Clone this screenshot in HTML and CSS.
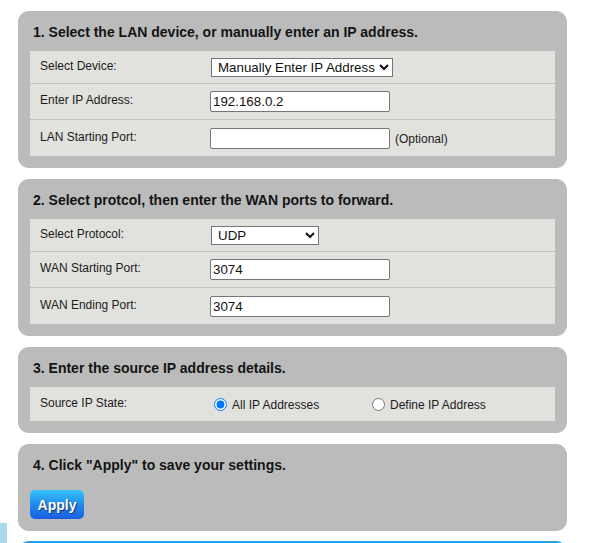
FILE: index.html
```html
<!DOCTYPE html>
<html>
<head>
<meta charset="utf-8">
<link rel="stylesheet" href="styles.css">
</head>
<body>
<div class="page">
  <section class="box">
    <h2 class="box-title">1. Select the LAN device, or manually enter an IP address.</h2>
    <div class="table">
      <div class="row row-select">
        <div class="label">Select Device:</div>
        <div class="field"><select class="sel sel-device"><option>Manually Enter IP Address</option></select></div>
      </div>
      <div class="row">
        <div class="label">Enter IP Address:</div>
        <div class="field"><input class="txt" type="text" value="192.168.0.2"></div>
      </div>
      <div class="row row-last">
        <div class="label">LAN Starting Port:</div>
        <div class="field"><input class="txt" type="text" value=""><span class="hint">(Optional)</span></div>
      </div>
    </div>
  </section>

  <section class="box">
    <h2 class="box-title">2. Select protcol, then enter the WAN ports to forward.</h2>
    <div class="table">
      <div class="row row-select">
        <div class="label">Select Protocol:</div>
        <div class="field"><select class="sel sel-proto"><option>UDP</option></select></div>
      </div>
      <div class="row">
        <div class="label">WAN Starting Port:</div>
        <div class="field"><input class="txt" type="text" value="3074"></div>
      </div>
      <div class="row row-last">
        <div class="label">WAN Ending Port:</div>
        <div class="field"><input class="txt" type="text" value="3074"></div>
      </div>
    </div>
  </section>

  <section class="box">
    <h2 class="box-title">3. Enter the source IP address details.</h2>
    <div class="table">
      <div class="row row-radio row-last">
        <div class="label">Source IP State:</div>
        <div class="field radios">
          <label class="radio radio-all"><input type="radio" name="src" checked> All IP Addresses</label>
          <label class="radio"><input type="radio" name="src"> Define IP Address</label>
        </div>
      </div>
    </div>
  </section>

  <section class="box box-apply">
    <h2 class="box-title">4. Click "Apply" to save your settings.</h2>
    <button class="apply" type="button">Apply</button>
  </section>

  <div class="next-box"></div>
</div>
<div class="side-tab"></div>
</body>
</html>
```

FILE: styles.css
```css
html, body {
  margin: 0;
  padding: 0;
  background: #ffffff;
}
body {
  font-family: Arial, "Liberation Sans", sans-serif;
  color: #1c1c1c;
  height: 543px;
  overflow: hidden;
  position: relative;
}
.page {
  width: 549px;
  padding: 11px 0 0 18px;
  display: flex;
  flex-direction: column;
  gap: 11px;
}
.box {
  background: #babbba;
  border-radius: 11px;
  padding: 0 12px 12px 12px;
}
.box-title {
  margin: 0;
  height: 40px;
  line-height: 42px;
  font-size: 14px;
  font-weight: bold;
  padding-left: 3px;
  color: #141414;
}
.table {
  background: #e1e1dd;
  display: flex;
  flex-direction: column;
}
.row {
  display: flex;
  align-items: center;
  height: 35px;
  border-bottom: 1px solid #c2c2c0;
}
.row-select {
  height: 32px;
}
.row-last {
  border-bottom: none;
  height: 36px;
}
.row-radio {
  height: 34px;
}
.label {
  width: 170px;
  padding-left: 10px;
  font-size: 12px;
  margin-top: -3px;
}
.field {
  display: flex;
  align-items: center;
}
.sel {
  font-family: Arial, "Liberation Sans", sans-serif;
  font-size: 13.33px;
  height: 19px;
  border: 1px solid #767676;
  border-radius: 0;
  background: #ffffff;
  color: #111;
  padding: 0 0 0 2px;
  margin: 0;
}
.sel-device {
  width: 182px;
  margin-left: 1px;
}
.sel-proto {
  width: 108px;
  margin-left: 1px;
}
.txt {
  font-family: Arial, "Liberation Sans", sans-serif;
  font-size: 13.33px;
  width: 180px;
  height: 21px;
  box-sizing: border-box;
  border: 1px solid #767676;
  border-radius: 2px;
  padding: 1px 2px;
  margin: 0;
  color: #111;
  background: #fff;
}
.hint {
  font-size: 12px;
  margin-left: 5px;
  margin-top: 1px;
}
.radios {
  font-size: 12px;
  margin-top: 1px;
}
.radio {
  display: flex;
  align-items: center;
}
.radio input {
  margin: 0 5px 0 4px;
  width: 13px;
  height: 13px;
}
.radio-all {
  width: 158px;
}
.box-apply {
  padding-bottom: 12px;
}
.apply {
  width: 54px;
  height: 29px;
  border: none;
  border-radius: 5px;
  background: linear-gradient(#34c3f8, #1f86ec 55%, #1a5ee2);
  color: #ffffff;
  font-family: Arial, "Liberation Sans", sans-serif;
  font-size: 14px;
  font-weight: bold;
  text-shadow: 1px 1px 1px #17306a;
  padding: 0;
  margin-top: 6px;
}
.next-box {
  flex: none;
  height: 20px;
  margin-top: -1px;
  background: #2a9fe4;
  border-radius: 11px 11px 0 0;
}
.side-tab {
  position: absolute;
  left: 0;
  top: 523px;
  width: 7px;
  height: 20px;
  background: #acd8ee;
}
```
